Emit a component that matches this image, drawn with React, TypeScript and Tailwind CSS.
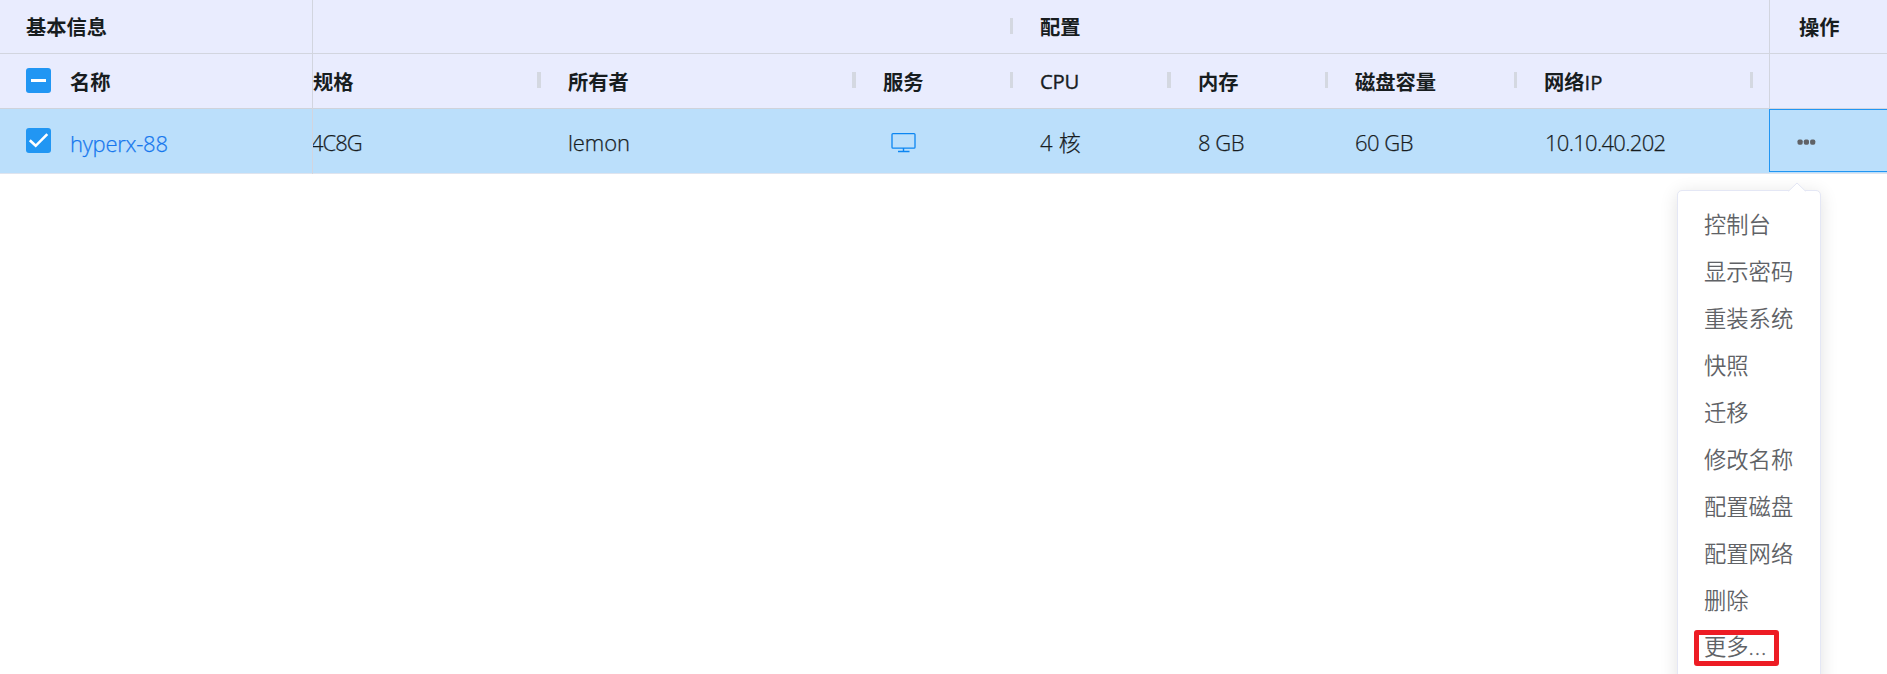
import type { ReactNode } from "react";

const HEAD_FONT = "font-['Open_Sans','Noto_Sans_CJK_SC',sans-serif]";

type Column = {
  title: string;
  value: ReactNode;
  width: string;
  handle: string;
  pad: string;
  plain?: boolean;
  tracking?: string;
};

const Monitor = () => (
  <svg className="ml-2 mt-0.5 block" width="26" height="22" viewBox="0 0 26 22" fill="none" stroke="#0c86f2">
    <rect x="1" y="1.6" width="23" height="14.6" rx="1" strokeWidth="1.3" />
    <path d="M12.5 16v3M7 19.5h11.5" strokeWidth="1.4" />
  </svg>
);

const columns: Column[] = [
  { title: "规格", value: <span className="-ml-0.5">4C8G</span>, width: "w-[228px]", handle: "w-1", pad: "pl-0", tracking: "tracking-[-1px]" },
  { title: "所有者", value: "lemon", width: "w-[315px]", handle: "w-1", pad: "pl-[27px]", tracking: "tracking-[-0.1px]" },
  { title: "服务", value: <Monitor />, width: "w-[157px]", handle: "w-[3px]", pad: "pl-[27px]" },
  { title: "CPU", value: "4 核", width: "w-[158px]", handle: "w-1", pad: "pl-[27px]", plain: true, tracking: "tracking-[0.3px]" },
  { title: "内存", value: "8 GB", width: "w-[157px]", handle: "w-[3px]", pad: "pl-[27px]", tracking: "tracking-[-0.5px]" },
  { title: "磁盘容量", value: "60 GB", width: "w-[189px]", handle: "w-[3px]", pad: "pl-[27px]", tracking: "tracking-[-0.5px]" },
  { title: "网络", value: <span className="ml-px">10.10.40.202</span>, width: "w-[236px]", handle: "w-[3px]", pad: "pl-[27px]", tracking: "tracking-[-0.7px]" },
];

const menu = ["控制台", "显示密码", "重装系统", "快照", "迁移", "修改名称", "配置磁盘", "配置网络", "删除"];

function Handle({ width }: { width: string }) {
  return <span className={`ml-auto h-4 shrink-0 -translate-y-px bg-[#d4d8e1] ${width}`} />;
}

export default function App() {
  return (
    <div className={`relative h-[674px] w-[1887px] overflow-hidden bg-white text-[#181d1f] ${HEAD_FONT}`}>
      <div className="flex h-[174px]">
        <div className="flex w-[313px] shrink-0 flex-col border-r border-[#d2d5df]">
          <div className="flex h-[54px] items-center border-b border-[#d2d5df] bg-[#e9ecfe] pl-[26px] pt-0.5 text-[20.3px] font-bold">
            基本信息
          </div>
          <div className="flex h-[55px] items-center border-b border-[#cfd3db] bg-[#e9ecfe] pl-[26px] text-[20.3px] font-bold">
            <span className="-mt-0.5 flex size-[25px] items-center justify-center rounded-[3px] bg-[#2196f3]">
              <span className="h-[3px] w-[15px] bg-white" />
            </span>
            <span className="ml-[19px] mt-0.5">名称</span>
          </div>
          <div className="flex h-[65px] items-center border-b border-[#dfe4ee] bg-[#bbdffb] pl-[26px]">
            <span className="-mt-0.5 flex size-[25px] items-center justify-center rounded-[3px] bg-[#2196f3]">
              <svg width="25" height="25" viewBox="0 0 25 25" fill="none" stroke="#fff" strokeWidth="2.6">
                <path d="M3.8 12.2l5.9 5.6L21.3 6.2" />
              </svg>
            </span>
            <span className="ml-[19px] mt-[5px] text-[22px] font-light tracking-[-0.25px] text-[#1677ee] [-webkit-text-stroke:0.25px]">
              hyperx-88
            </span>
          </div>
        </div>

        <div className="flex w-[1456px] shrink-0 flex-col overflow-hidden">
          <div className="flex h-[54px] items-center border-b border-[#d2d5df] bg-[#e9ecfe] text-[20.3px] font-bold">
            <div className="flex w-[700px] items-center">
              <Handle width="w-[3px]" />
            </div>
            <div className="pl-[27px] pt-0.5">配置</div>
          </div>
          <div className="flex h-[55px] items-center border-b border-[#cfd3db] bg-[#e9ecfe] text-[20.3px] font-bold">
            {columns.map((c) => (
              <div key={c.title} className={`flex shrink-0 items-center ${c.width} ${c.pad}`}>
                <span className={c.plain ? "mt-px font-medium tracking-[-0.3px] [-webkit-text-stroke:0.35px]" : "mt-0.5"}>
                  {c.title}
                </span>
                {c.title === "网络" && (
                  <span className="mt-0.5 font-medium [-webkit-text-stroke:0.35px]">IP</span>
                )}
                <Handle width={c.handle} />
              </div>
            ))}
          </div>
          <div className="flex h-[65px] items-center border-b border-[#dfe4ee] bg-[#bbdffb] text-[22px] font-light [-webkit-text-stroke:0.25px]">
            {columns.map((c) => (
              <div key={c.title} className={`flex shrink-0 items-center pt-0.5 ${c.width} ${c.pad} ${c.tracking ?? ""}`}>
                {c.value}
              </div>
            ))}
          </div>
        </div>

        <div className="flex w-[118px] shrink-0 flex-col">
          <div className="flex h-[54px] items-center border-b border-l border-[#d2d5df] bg-[#e9ecfe] pl-[29px] pt-0.5 text-[20.3px] font-bold">
            操作
          </div>
          <div className="h-[55px] border-b border-l border-[#d2d5df] bg-[#e9ecfe]" />
          <div className="h-[65px] border-b border-[#dfe4ee] bg-[#bbdffb] pb-px">
            <div className="flex h-[63px] items-center border border-r-0 border-[#2196f3] pl-[27px] pt-[3px]">
              <svg width="20" height="6" viewBox="0 0 20 6" fill="#606266">
                <rect x="0.5" y="0.5" width="5.2" height="5.2" rx="1.7" />
                <rect x="6.8" y="0.5" width="5.2" height="5.2" rx="1.7" />
                <rect x="13.1" y="0.5" width="5.2" height="5.2" rx="1.7" />
              </svg>
            </div>
          </div>
        </div>
      </div>

      <div className="absolute left-[1677px] top-[190px] w-[144px] rounded-[5px] border border-[#e4e7f5] bg-white pb-4 pt-[10px] shadow-[0_3px_18px_rgba(0,0,0,0.12)]">
        <svg className="absolute left-[109px] top-[-9px]" width="20" height="11" viewBox="0 0 20 11">
          <path d="M1 9.5L10 1l9 8.5V11H1z" fill="#fff" />
          <path d="M1.5 9.2L10 1l8.5 8.2" fill="none" stroke="#e4e7f5" />
        </svg>
        <ul className="text-[22.3px] font-[350] leading-[47px] text-[#606266]">
          {menu.map((m) => (
            <li key={m} className="h-[47px] pl-[26px]">{m}</li>
          ))}
          <li className="flex h-[47px] items-center pl-4">
            <span className="flex h-9 w-[85px] items-center rounded-[3px] border-[5px] border-[#ed1c24] pl-[5px] leading-none">
              更多<span className="tracking-[0.9px] [-webkit-text-stroke:0.3px]">...</span>
            </span>
          </li>
        </ul>
      </div>
    </div>
  );
}
